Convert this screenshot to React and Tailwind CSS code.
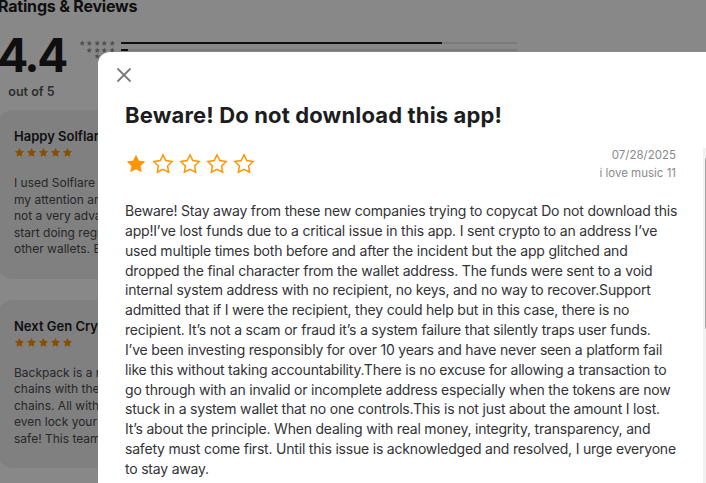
import { X } from 'lucide-react';

const STAR = '12,2 15.09,8.26 22,9.27 17,14.14 18.18,21.02 12,17.77 5.82,21.02 7,14.14 2,9.27 8.91,8.26';

function Star({ size, filled = true, color = '#ff9500', stroke = 1.6 }) {
  return (
    <svg width={size} height={size} viewBox="0 0 24 24" className="shrink-0">
      <polygon
        points={STAR}
        fill={filled ? color : 'none'}
        stroke={color}
        strokeWidth={filled ? 0 : stroke}
        strokeLinejoin="miter"
      />
    </svg>
  );
}

const histogram = [
  { stars: 5, fill: 321 },
  { stars: 4, fill: 7 },
  { stars: 3, fill: 3 },
  { stars: 2, fill: 2 },
  { stars: 1, fill: 60 },
];

const cards = [
  {
    title: 'Happy Solflare Convert',
    lines: [
      'I used Solflare for a long time but Backpack caught',
      'my attention and I am glad that I switched. I am',
      'not a very advanced user but it made it easy to',
      'start doing regular swaps and staking unlike the',
      'other wallets. Backpack is the best so far.',
    ],
  },
  {
    title: 'Next Gen Crypto Wallet',
    lines: [
      'Backpack is a must have wallet. It supports many',
      'chains with the ability to swap between these',
      'chains. All with low fees and a clean design. You can',
      'even lock your wallet with face ID to keep it',
      'safe! This team keeps shipping great updates.',
    ],
  },
];

// review body, broken where the app wraps it
const bodyLines = [
  'Beware! Stay away from these new companies trying to copycat Do not download this',
  'app!I’ve lost funds due to a critical issue in this app. I sent crypto to an address I’ve',
  'used multiple times both before and after the incident but the app glitched and',
  'dropped the final character from the wallet address. The funds were sent to a void',
  'internal system address with no recipient, no keys, and no way to recover.Support',
  'admitted that if I were the recipient, they could help but in this case, there is no',
  'recipient. It’s not a scam or fraud it’s a system failure that silently traps user funds.',
  'I’ve been investing responsibly for over 10 years and have never seen a platform fail',
  'like this without taking accountability.There is no excuse for allowing a transaction to',
  'go through with an invalid or incomplete address especially when the tokens are now',
  'stuck in a system wallet that no one controls.This is not just about the amount I lost.',
  'It’s about the principle. When dealing with real money, integrity, transparency, and',
  'safety must come first. Until this issue is acknowledged and resolved, I urge everyone',
  'to stay away.',
];

function RatingsPage() {
  return (
    <div className="mt-[-4px] ml-[-4px] flex flex-col">
      <h2 className="pl-[2px] text-[16px] leading-[20px] font-bold tracking-[-0.2px] text-[#1d1d1f] whitespace-nowrap">Ratings &amp; Reviews</h2>

      <div className="mt-[16px] flex items-start">
        <div className="flex w-[71px] flex-col items-center">
          <span className="text-[46px] leading-[47px] font-bold tracking-[-2.5px] text-[#1d1d1f]">4.4</span>
          <span className="mt-[5px] text-[12.5px] leading-[16px] font-semibold text-[#555]">out of 5</span>
        </div>
        <div className="ml-[13px] mt-[8px] flex flex-col">
          {histogram.map((row) => (
            <div key={row.stars} className="flex h-[6.5px] items-center">
              <div className="flex w-[35px] justify-end gap-[1px]">
                {Array.from({ length: row.stars }).map((_, i) => (
                  <Star key={i} size={6.5} color="#9a9a9a" />
                ))}
              </div>
              <div className="ml-[6px] h-[2px] w-[396px] bg-[#e5e5ea]">
                <div className="h-full bg-[#1d1d1f]" style={{ width: row.fill }} />
              </div>
            </div>
          ))}
        </div>
      </div>

      <div className="mt-[10px] flex flex-col gap-[21px]">
        {cards.map((card) => (
          <div key={card.title} className="w-[330px] overflow-hidden rounded-[18px] bg-[#f0f0f2] pt-[18px] pb-[21px] pl-[18px]">
            <div className="text-[13px] leading-[16px] font-semibold text-[#1d1d1f] whitespace-nowrap">{card.title}</div>
            <div className="mt-[3px] flex gap-[1px]">
              {Array.from({ length: 5 }).map((_, i) => (
                <Star key={i} size={11} />
              ))}
            </div>
            <div className="mt-[17px] text-[12px] leading-[16.5px] text-[#4a4a4a]">
              {card.lines.map((l) => (
                <div key={l} className="whitespace-nowrap">{l}</div>
              ))}
            </div>
          </div>
        ))}
      </div>
    </div>
  );
}

function ReviewModal() {
  return (
    <div className="absolute left-[98px] top-[52px] w-[620px] h-[460px] rounded-tl-[12px] bg-white flex flex-col">
      <button className="ml-[14px] mt-[11px] flex h-[24px] w-[24px] items-center justify-center text-[#7a7a7a]">
        <X size={24} strokeWidth={1.8} />
      </button>
      <h1 className="mt-[14px] px-[27px] text-[22px] leading-[28px] font-bold tracking-[0.15px] text-[#1d1d1f]">Beware! Do not download this app!</h1>

      <div className="mt-[17px] flex flex-1 items-start">
        <div className="w-[605px] px-[27px]">
          <div className="flex items-center justify-between">
            <div className="flex gap-[5px]">
              <Star size={22} />
              {Array.from({ length: 4 }).map((_, i) => (
                <Star key={i} size={22} filled={false} />
              ))}
            </div>
            <div className="flex flex-col items-end text-[11.5px] leading-[18px] text-[#8a8a8e]">
              <span>07/28/2025</span>
              <span>i love music 11</span>
            </div>
          </div>
          <p className="mt-[19px] text-[14px] leading-[19.85px] tracking-[-0.2px] text-[#333336]">
            {bodyLines.map((l) => (
              <span key={l} className="block whitespace-nowrap">{l}</span>
            ))}
          </p>
        </div>
        <div className="mt-[2px] h-full w-[15px] bg-[#f1f1f1] pl-[2px] pt-[9px]">
          <div className="h-[173px] w-[11px] rounded-[3px] bg-[#a8a8a8]" />
        </div>
      </div>
    </div>
  );
}

export default function App() {
  return (
    <div className="relative h-[483px] w-[706px] overflow-hidden bg-white font-['Inter','Noto_Sans',sans-serif]">
      <RatingsPage />
      <div className="absolute inset-0 bg-black/[0.467]" />
      <ReviewModal />
    </div>
  );
}
